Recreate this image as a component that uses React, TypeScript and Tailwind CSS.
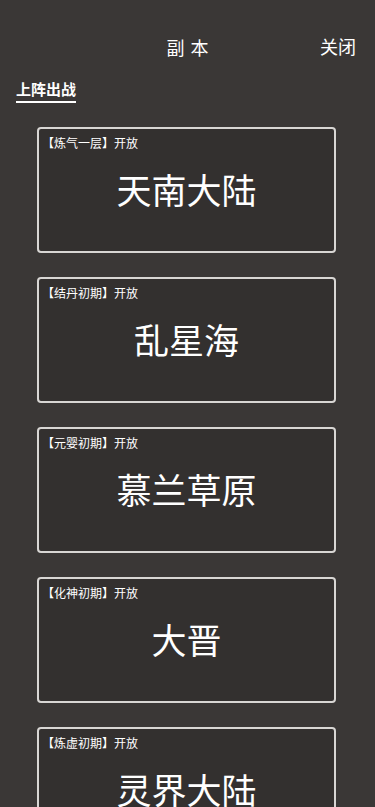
const stages = [
  { level: '【炼气一层】开放', name: '天南大陆' },
  { level: '【结丹初期】开放', name: '乱星海' },
  { level: '【元婴初期】开放', name: '慕兰草原' },
  { level: '【化神初期】开放', name: '大晋' },
  { level: '【炼虚初期】开放', name: '灵界大陆' },
];

export default function App() {
  return (
    <div
      className="h-[807px] w-[375px] overflow-hidden bg-[#3a3736] text-white"
      style={{ fontFamily: '"Noto Sans CJK SC", "Noto Sans", sans-serif' }}
    >
      <div className="relative h-[76px]">
        <div className="pt-[34px] text-center text-[18px] leading-[26px] tracking-[6px] pl-[6px]">副本</div>
        <div className="absolute right-[19px] top-[33px] text-[18px] leading-[26px]">关闭</div>
      </div>
      <div className="pl-4">
        <span className="inline-block border-b-2 border-white pb-[2px] text-[15px] font-bold leading-[20px]">上阵出战</span>
      </div>
      <div className="mt-[24px] flex flex-col gap-[24px] pl-[37px] pr-[39px]">
        {stages.map((s) => (
          <div key={s.name} className="h-[126px] rounded-[4px] border-2 border-[#d8d6d4] bg-[#33302f] px-[3px] pt-[6px]">
            <div className="text-[12px] leading-[16px]">{s.level}</div>
            <div className="mt-[18px] text-center text-[35px] leading-[40px]">{s.name}</div>
          </div>
        ))}
      </div>
    </div>
  );
}
